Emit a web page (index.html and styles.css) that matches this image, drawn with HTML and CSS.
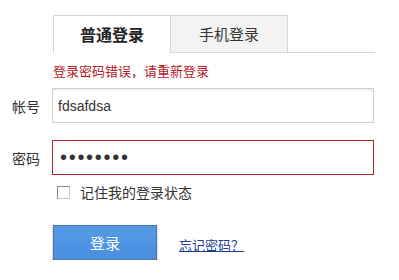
FILE: index.html
```html
<!DOCTYPE html>
<html lang="zh-CN">
<head>
  <meta charset="UTF-8">
  <meta name="viewport" content="width=device-width, initial-scale=1.0">
  <title>登录</title>
  <link rel="stylesheet" href="styles.css">
</head>
<body>
  <div class="login">
    <ul class="tabs">
      <li class="tab active">普通登录</li>
      <li class="tab">手机登录</li>
    </ul>

    <div class="error">登录密码错误，请重新登录</div>

    <div class="row">
      <label class="label" for="user">帐号</label>
      <input class="field" id="user" type="text" value="fdsafdsa">
    </div>

    <div class="row row-pass">
      <label class="label" for="pass">密码</label>
      <input class="field field-error" id="pass" type="password" value="12345678">
    </div>

    <label class="remember">
      <input type="checkbox" class="check">
      <span>记住我的登录状态</span>
    </label>

    <div class="actions">
      <button class="submit">登录</button>
      <a class="forgot" href="#">忘记密码？</a>
    </div>
  </div>
</body>
</html>
```

FILE: styles.css
```css
body {
  margin: 0;
  background: #fff;
  font-family: "Noto Sans CJK SC", "Liberation Sans", sans-serif;
  color: #333;
}
.login {
  padding: 15px 0 0 12px;
}
.tabs {
  list-style: none;
  margin: 0 0 0 41px;
  padding: 0;
  width: 322px;
  display: flex;
  border-bottom: 1px solid #d6d6d6;
}
.tab {
  width: 116px;
  height: 36px;
  line-height: 36px;
  text-align: center;
  font-size: 15px;
  color: #333;
  background: #f3f3f3;
  border: 1px solid #d6d6d6;
  border-bottom: none;
  border-left: none;
}
.tab.active {
  background: #fff;
  font-size: 16px;
  font-weight: bold;
  color: #222;
  border-left: 1px solid #d6d6d6;
  height: 37px;
  margin-bottom: -1px;
}
.error {
  margin: 9px 0 0 41px;
  height: 18px;
  line-height: 18px;
  font-size: 13px;
  color: #b3171d;
}
.row {
  display: flex;
  align-items: center;
  margin-top: 8px;
}
.row-pass {
  margin-top: 17px;
}
.label {
  width: 40px;
  font-size: 14px;
  color: #333;
}
.field {
  box-sizing: border-box;
  width: 322px;
  height: 35px;
  margin: 0;
  padding: 0 5px;
  border: 1px solid #cfcfcf;
  box-shadow: inset 0 2px 2px rgba(0, 0, 0, 0.06);
  font-family: "Liberation Sans", Arial, sans-serif;
  font-size: 14px;
  color: #333;
  outline: none;
}
.field-error {
  padding-left: 7px;
  border-color: #b12a2a;
  box-shadow: none;
  font-size: 20px;
  letter-spacing: 1.7px;
  color: #333;
}
.remember {
  display: flex;
  align-items: center;
  margin: 7px 0 0 45px;
  height: 20px;
  font-size: 14px;
  color: #333;
}
.check {
  appearance: none;
  box-sizing: border-box;
  width: 13px;
  height: 13px;
  margin: 0 10px 0 0;
  border: 1px solid #8a8a8a;
  border-right-color: #c8c8c8;
  border-bottom-color: #c8c8c8;
  background: #fff;
}
.actions {
  display: flex;
  align-items: center;
  margin: 23px 0 0 41px;
}
.submit {
  width: 104px;
  height: 35px;
  padding: 0;
  border: 1px dotted #555;
  background: linear-gradient(#549be6, #4a8ee0);
  box-shadow: 0 1px 2px rgba(0, 0, 0, 0.35);
  color: #fff;
  font-family: "Noto Sans CJK SC", sans-serif;
  font-size: 15px;
  cursor: pointer;
}
.forgot {
  margin-left: 22px;
  margin-top: 3px;
  font-size: 13px;
  color: #1b3e94;
}
```
